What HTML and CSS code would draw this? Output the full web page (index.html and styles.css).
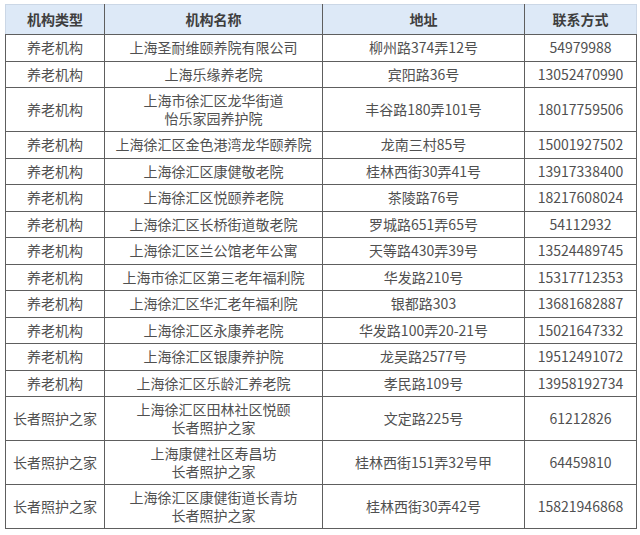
FILE: index.html
```html
<!DOCTYPE html>
<html lang="zh-CN">
<head>
<meta charset="utf-8">
<title>养老机构</title>
<link rel="stylesheet" href="styles.css">
</head>
<body>
<table class="list">
  <colgroup>
    <col class="c1"><col class="c2"><col class="c3"><col class="c4">
  </colgroup>
  <thead>
    <tr><th>机构类型</th><th>机构名称</th><th>地址</th><th>联系方式</th></tr>
  </thead>
  <tbody>
    <tr><td>养老机构</td><td>上海圣耐维颐养院有限公司</td><td>柳州路374弄12号</td><td>54979988</td></tr>
    <tr><td>养老机构</td><td>上海乐缘养老院</td><td>宾阳路36号</td><td>13052470990</td></tr>
    <tr><td>养老机构</td><td><span class="ln">上海市徐汇区龙华街道</span><span class="ln">怡乐家园养护院</span></td><td>丰谷路180弄101号</td><td>18017759506</td></tr>
    <tr><td>养老机构</td><td>上海徐汇区金色港湾龙华颐养院</td><td>龙南三村85号</td><td>15001927502</td></tr>
    <tr><td>养老机构</td><td>上海徐汇区康健敬老院</td><td>桂林西街30弄41号</td><td>13917338400</td></tr>
    <tr><td>养老机构</td><td>上海徐汇区悦颐养老院</td><td>茶陵路76号</td><td>18217608024</td></tr>
    <tr><td>养老机构</td><td>上海徐汇区长桥街道敬老院</td><td>罗城路651弄65号</td><td>54112932</td></tr>
    <tr><td>养老机构</td><td>上海徐汇区兰公馆老年公寓</td><td>天等路430弄39号</td><td>13524489745</td></tr>
    <tr><td>养老机构</td><td>上海市徐汇区第三老年福利院</td><td>华发路210号</td><td>15317712353</td></tr>
    <tr><td>养老机构</td><td>上海徐汇区华汇老年福利院</td><td>银都路303</td><td>13681682887</td></tr>
    <tr><td>养老机构</td><td>上海徐汇区永康养老院</td><td>华发路100弄20-21号</td><td>15021647332</td></tr>
    <tr><td>养老机构</td><td>上海徐汇区银康养护院</td><td>龙吴路2577号</td><td>19512491072</td></tr>
    <tr><td>养老机构</td><td>上海徐汇区乐龄汇养老院</td><td>孝民路109号</td><td>13958192734</td></tr>
    <tr><td>长者照护之家</td><td><span class="ln">上海徐汇区田林社区悦颐</span><span class="ln">长者照护之家</span></td><td>文定路225号</td><td>61212826</td></tr>
    <tr><td>长者照护之家</td><td><span class="ln">上海康健社区寿昌坊</span><span class="ln">长者照护之家</span></td><td>桂林西街151弄32号甲</td><td>64459810</td></tr>
    <tr><td>长者照护之家</td><td><span class="ln">上海徐汇区康健街道长青坊</span><span class="ln">长者照护之家</span></td><td>桂林西街30弄42号</td><td>15821946868</td></tr>
  </tbody>
</table>
</body>
</html>
```

FILE: styles.css
```css
html, body {
  margin: 0;
  background: #ffffff;
}
body {
  padding: 4px 5px;
  font-family: "Noto Sans CJK SC", "Noto Sans", sans-serif;
}
.list {
  width: 631px;
  border-collapse: collapse;
  table-layout: fixed;
  font-size: 14px;
  line-height: 17.5px;
  color: #505050;
}
.c1 { width: 99px; }
.c2 { width: 218px; }
.c3 { width: 202px; }
.c4 { width: 112px; }
.list th, .list td {
  text-align: center;
  vertical-align: middle;
  padding: 0;
  border: 1px solid #5e5e5e;
  white-space: nowrap;
}
.list th {
  height: 29px;
  background: #dde9f7;
  color: #3e3e3e;
  font-weight: bold;
  border-top-color: #cbd7e6;
}
.list thead th:first-child { border-left-color: #cbd7e6; }
.list thead th:last-child { border-right-color: #cbd7e6; }
.list td {
  padding: 4px 0;
}
.ln {
  display: block;
  height: 17.5px;
  line-height: 17.5px;
}
```
